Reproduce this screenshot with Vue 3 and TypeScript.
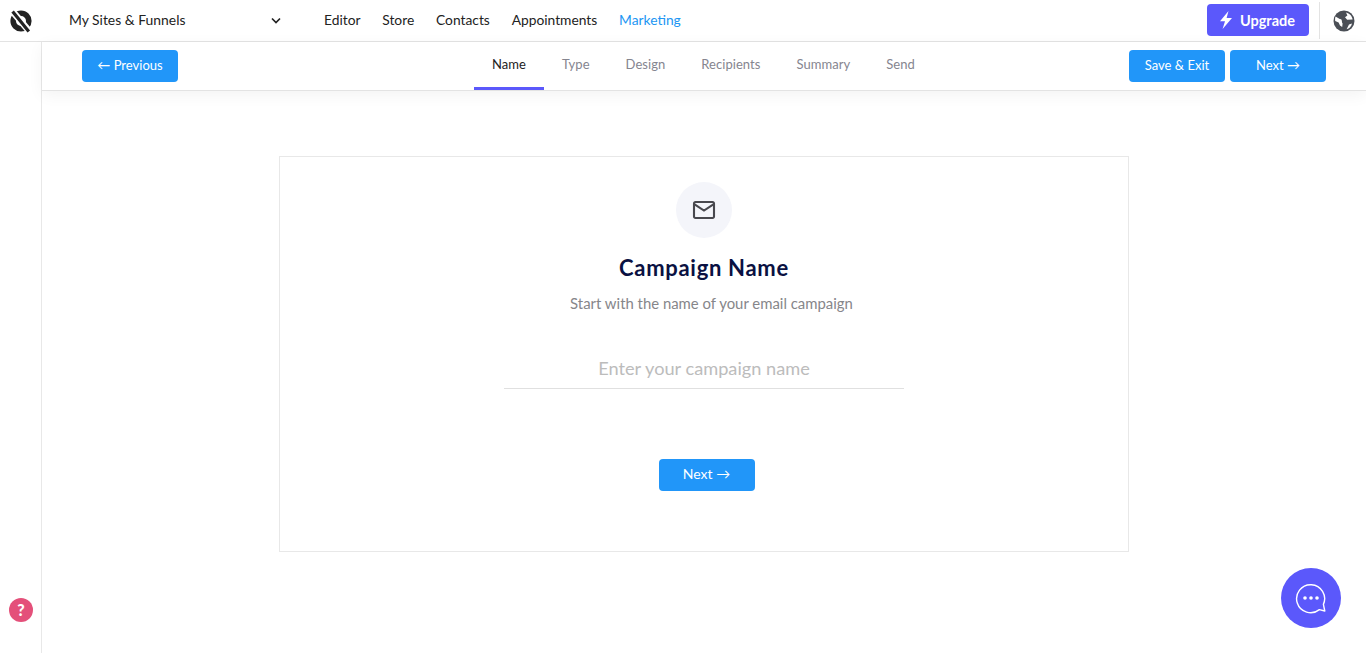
<script setup lang="ts">
const navItems: string[] = ['Editor', 'Store', 'Contacts', 'Appointments']
const steps: string[] = ['Name', 'Type', 'Design', 'Recipients', 'Summary', 'Send']
</script>

<template>
  <div class="page">
    <header class="topbar">
      <div class="logo-cell">
        <svg class="logo" width="24" height="24" viewBox="0 0 24 24">
          <circle cx="12" cy="12" r="7.8" fill="none" stroke="#222" stroke-width="5.6" />
          <path d="M4 3 L20 22" stroke="#fff" stroke-width="6.6" />
          <path d="M3.6 2.4 L19.8 22.4" stroke="#222" stroke-width="3.2" />
        </svg>
      </div>
      <div class="site-select">
        <span>My Sites &amp; Funnels</span>
        <svg width="10" height="7" viewBox="0 0 10 7"><path d="M1 1.5 L5 5.5 L9 1.5" fill="none" stroke="#222" stroke-width="1.7" /></svg>
      </div>
      <nav class="nav">
        <a v-for="n in navItems" :key="n">{{ n }}</a>
        <a class="active">Marketing</a>
      </nav>
      <div class="top-right">
        <button class="upgrade">
          <svg width="14" height="18" viewBox="0 0 14 18"><path d="M9.5 0 L1 10.2 H6 L3.6 18 L13 7 H7.6 Z" fill="#fff" /></svg>
          <span>Upgrade</span>
        </button>
        <div class="divider"></div>
        <svg class="globe" width="22" height="22" viewBox="0 0 22 22">
          <circle cx="11" cy="11" r="10.5" fill="#4b4f56" />
          <path d="M2.6 6.5 C5 8 6 9 8.2 9.2 C9.5 11 8.4 12.2 9.6 13.4 L9.2 17 L7 15.5 L5.6 12.6 L2.2 11 C2 9 2 8 2.6 6.5 Z" fill="#fff" />
          <path d="M13 2.4 L14.4 5.6 L12 7.2 L14.2 9.8 L19.6 9.5 C19.2 6 16.6 3.2 13 2.4 Z" fill="#fff" />
          <path d="M13.6 19.2 L16 14.6 L19 13.4 C18.4 16.2 16.4 18.4 13.6 19.2 Z" fill="#fff" />
        </svg>
      </div>
    </header>
    <div class="body">
      <aside class="rail">
        <div class="help">?</div>
      </aside>
      <main class="main">
        <div class="stepbar">
          <button class="btn prev">← Previous</button>
          <div class="steps">
            <span v-for="(s, i) in steps" :key="s" class="step" :class="{ current: i === 0 }">{{ s }}</span>
          </div>
          <div class="step-actions">
            <button class="btn">Save &amp; Exit</button>
            <button class="btn">Next →</button>
          </div>
        </div>
        <div class="content">
          <section class="card">
            <div class="icon-circle">
              <svg width="24" height="24" viewBox="0 0 24 24"><path d="M3.4 4 H20.6 A1.4 1.4 0 0 1 22 5.4 V18.6 A1.4 1.4 0 0 1 20.6 20 H3.4 A1.4 1.4 0 0 1 2 18.6 V5.4 A1.4 1.4 0 0 1 3.4 4 Z M2.6 6.4 L12 12.6 L21.4 6.4" fill="none" stroke="#48484e" stroke-width="2.1" /></svg>
            </div>
            <h1>Campaign Name</h1>
            <p>Start with the name of your email campaign</p>
            <div class="field">Enter your campaign name</div>
            <button class="btn big">Next →</button>
          </section>
        </div>
      </main>
    </div>
    <div class="chat">
      <svg width="32" height="32" viewBox="0 0 32 32">
        <path d="M24.4 27.6 A14 14 0 1 1 28.4 22.4 L29.8 29 Z" fill="none" stroke="#fff" stroke-width="1.4" stroke-linejoin="round" />
        <circle cx="10" cy="16" r="1.8" fill="#fff" /><circle cx="16" cy="16" r="1.8" fill="#fff" /><circle cx="22" cy="16" r="1.8" fill="#fff" />
      </svg>
    </div>
  </div>
</template>

<style>
html, body { margin: 0; background: #fff; }
</style>

<style scoped>
.page { height: 653px; display: flex; flex-direction: column; position: relative; overflow: hidden; font-family: "Lato", "Open Sans", sans-serif; color: #222; }
.topbar { height: 41px; flex: none; display: flex; align-items: center; border-bottom: 1px solid #e3e3e3; background: #fff; }
.logo-cell { width: 41px; flex: none; display: flex; justify-content: center; }
.logo { margin-left: 1px; }
.site-select { width: 212px; margin-left: 28px; flex: none; display: flex; align-items: center; justify-content: space-between; font-size: 13.9px; line-height: 16px; padding-bottom: 1px; box-sizing: border-box; }
.nav { display: flex; gap: 21.8px; margin-left: 43px; font-size: 13.8px; line-height: 16px; padding-bottom: 1px; }
.nav .active { color: #2196f3; }
.top-right { margin-left: auto; display: flex; align-items: center; padding-right: 11px; height: 100%; }
.upgrade { width: 102px; height: 32px; margin-bottom: 1px; border: none; border-radius: 4px; background: #5b58fb; color: #fff; font: 700 14.5px "Lato", sans-serif; display: flex; align-items: center; justify-content: center; gap: 7px; padding: 0 2px 0 0; }
.divider { width: 1px; height: 37px; background: #e3e3e3; margin: 0 13px 0 10px; }
.body { flex: 1; display: flex; min-height: 0; }
.rail { width: 41px; flex: none; border-right: 1px solid #e8e8e8; position: relative; }
.help { position: absolute; left: 9px; top: 556px; width: 24px; height: 24px; border-radius: 50%; background: #e4507a; color: #fff; font: 900 16px/24px "Lato", sans-serif; text-align: center; }
.main { flex: 1; min-width: 0; display: flex; flex-direction: column; }
.stepbar { height: 48px; flex: none; display: flex; align-items: stretch; justify-content: space-between; padding: 0 40px; border-bottom: 1px solid #e3e3e3; box-shadow: 0 4px 16px rgba(0,0,0,.05); position: relative; }
.btn { width: 96px; height: 32px; border: none; border-radius: 4px; background: #2196f9; color: #fff; font: 400 13px/30px "Lato", sans-serif; padding: 0 0 2px; }
.prev, .step-actions { margin-top: 8px; }
.step-actions { display: flex; gap: 5px; }
.steps { display: flex; margin-left: 296px; margin-right: auto; font-size: 13px; letter-spacing: .05px; color: #85858f; }
.step { padding: 0 18px; line-height: 45px; height: 48px; box-sizing: border-box; }
.step.current { color: #222; border-bottom: 3px solid #5b58fb; }
.content { flex: 1; padding: 65px 0 0 237px; }
.card { width: 848px; height: 394px; border: 1px solid #e8e8e8; display: flex; flex-direction: column; align-items: center; }
.icon-circle { width: 56px; height: 56px; margin-top: 25px; border-radius: 50%; background: #f4f5fa; display: flex; align-items: center; justify-content: center; }
h1 { margin: 17px 0 0; font: 700 22px/26px "Lato", sans-serif; color: #0a1142; letter-spacing: .7px; }
p { margin: 12px 0 0 15px; font-size: 14.9px; line-height: 20px; color: #86868a; }
.field { width: 400px; height: 45px; margin: 30px 0 0; border-bottom: 1px solid #e0e0e0; text-align: center; font-size: 18.2px; line-height: 50px; color: #bcbcbc; }
.big { margin: 70px 0 0 5px; font-size: 14px; }
.chat { position: absolute; left: 1281px; top: 568px; width: 60px; height: 60px; border-radius: 50%; background: #5b58fb; display: flex; align-items: center; justify-content: center; }
</style>
